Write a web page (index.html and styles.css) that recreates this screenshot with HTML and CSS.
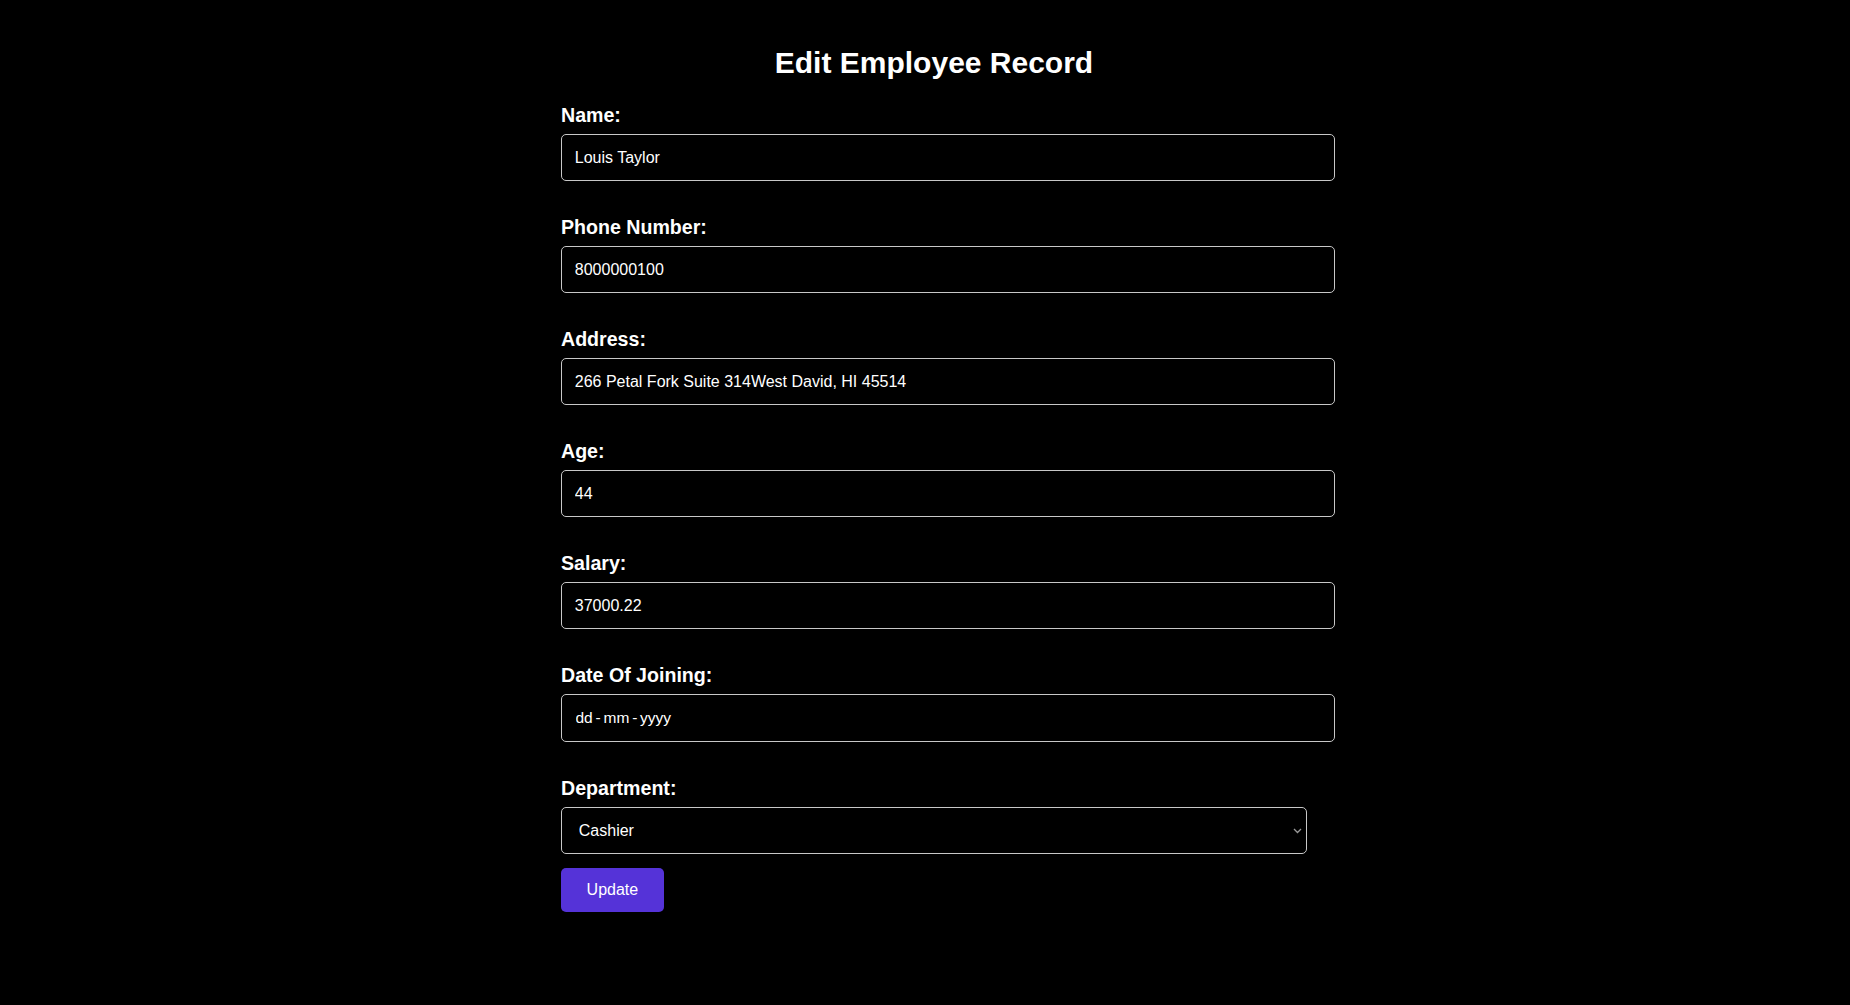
FILE: index.html
```html
<!DOCTYPE html>
<html lang="en">
<head>
<meta charset="UTF-8">
<title>Edit Employee Record</title>
<link rel="stylesheet" href="styles.css">
</head>
<body>
<div class="container">
  <h2 class="title">Edit Employee Record</h2>
  <form class="form">
    <div class="group">
      <label class="label" for="name">Name:</label>
      <input class="field" id="name" type="text" value="Louis Taylor">
    </div>
    <div class="group">
      <label class="label" for="phone">Phone Number:</label>
      <input class="field" id="phone" type="text" value="8000000100">
    </div>
    <div class="group">
      <label class="label" for="address">Address:</label>
      <input class="field" id="address" type="text" value="266 Petal Fork Suite 314West David, HI 45514">
    </div>
    <div class="group">
      <label class="label" for="age">Age:</label>
      <input class="field" id="age" type="text" value="44">
    </div>
    <div class="group">
      <label class="label" for="salary">Salary:</label>
      <input class="field" id="salary" type="text" value="37000.22">
    </div>
    <div class="group">
      <label class="label" for="doj">Date Of Joining:</label>
      <input class="field field-date" id="doj" type="text" placeholder="dd - mm - yyyy">
    </div>
    <div class="group group-last">
      <label class="label" for="dept">Department:</label>
      <div class="select-wrap">
        <select class="select" id="dept">
          <option>Cashier</option>
          <option>Manager</option>
          <option>Sales</option>
        </select>
        <svg class="chevron" width="9" height="6" viewBox="0 0 9 6" aria-hidden="true">
          <path d="M1 1 L4.5 4.5 L8 1" fill="none" stroke="#9a9a9a" stroke-width="1.3"/>
        </svg>
      </div>
    </div>
    <button class="btn" type="button">Update</button>
  </form>
</div>
</body>
</html>
```

FILE: styles.css
```css
html, body {
  margin: 0;
  padding: 0;
  background: #000;
  color: #fff;
  font-family: "Liberation Sans", Arial, sans-serif;
}

.container {
  width: 746px;
  margin: 0 auto;
  padding: 46px 0 40px 18px;
}

.title {
  margin: 0 0 24px;
  font-size: 30px;
  font-weight: bold;
  text-align: center;
}

.form {
  display: flex;
  flex-direction: column;
  align-items: flex-start;
}

.group {
  width: 100%;
  margin-bottom: 35px;
}

.group-last {
  margin-bottom: 13.5px;
}

.label {
  display: block;
  font-size: 19.6px;
  font-weight: bold;
  margin-bottom: 7px;
}

.field {
  display: block;
  width: 100%;
  box-sizing: content-box;
  height: 19px;
  padding: 13px 12.8px;
  background: #000;
  color: #fff;
  border: 1px solid #c8c8c8;
  border-radius: 5px;
  font-family: "Liberation Sans", Arial, sans-serif;
  font-size: 16px;
  outline: none;
  margin: 0;
}

.field-date {
  height: 20px;
  font-size: 15.5px;
  word-spacing: -1.5px;
  padding-left: 13.5px;
}

.field-date::placeholder {
  color: #fff;
  opacity: 1;
}

.select-wrap {
  position: relative;
  width: 100%;
}

.select {
  display: block;
  width: 100%;
  height: 47px;
  padding: 0 12.8px 0 16.8px;
  background: #000;
  color: #fff;
  border: 1px solid #c8c8c8;
  border-radius: 5px;
  font-family: "Liberation Sans", Arial, sans-serif;
  font-size: 16px;
  margin: 0;
  appearance: none;
  -webkit-appearance: none;
}

.chevron {
  position: absolute;
  right: 5px;
  top: 21px;
  pointer-events: none;
}

.btn {
  padding: 12.8px 25.6px;
  height: 44px;
  background: #5533d8;
  color: #fff;
  border: none;
  border-radius: 5px;
  font-family: "Liberation Sans", Arial, sans-serif;
  font-size: 16px;
  line-height: normal;
  cursor: pointer;
}
```
